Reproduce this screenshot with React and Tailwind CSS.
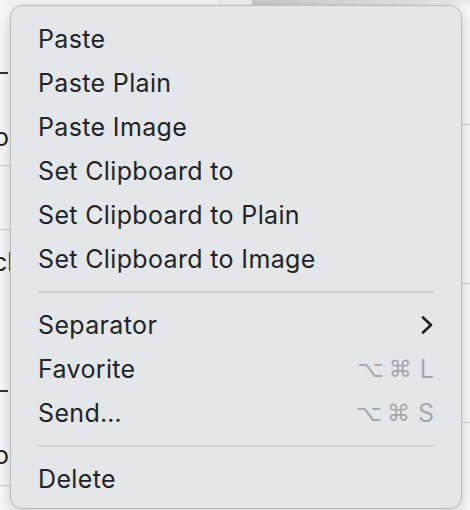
const items = [
  { label: "Paste" },
  { label: "Paste Plain" },
  { label: "Paste Image" },
  { label: "Set Clipboard to" },
  { label: "Set Clipboard to Plain" },
  { label: "Set Clipboard to Image" },
  { sep: true },
  { label: "Separator", submenu: true },
  { label: "Favorite", keys: "L" },
  { label: "Send…", keys: "S" },
  { sep: true },
  { label: "Delete" },
];

const Chevron = () => (
  <svg width="14" height="20" viewBox="0 0 14 20" fill="none">
    <path d="M3 2.5 L11 10 L3 17.5" stroke="#1f1f1f" strokeWidth="2.6" strokeLinecap="round" strokeLinejoin="round" />
  </svg>
);

const Shortcut = ({ k }) => (
  <div className="flex items-center gap-[5px] text-[#a6a8ab] leading-none">
    <span className="text-[23px] font-['DejaVu_Sans',sans-serif]">⌥</span>
    <span className="text-[23px] font-['DejaVu_Sans',sans-serif]">⌘</span>
    <span className="text-[25px] ml-[3px]">{k}</span>
  </div>
);

// bits of the window that peek out behind the menu
const LeftEdge = () => (
  <div className="w-[10px] flex flex-col overflow-hidden text-[25px] text-[#222]">
    <div className="h-[72px] shrink-0" />
    <div className="h-[2px] w-[8px] shrink-0 bg-[#333]" />
    <div className="h-[49px] shrink-0" />
    <div className="h-[28px] shrink-0 leading-[28px] -ml-[6px]">o</div>
    <div className="h-[14px] shrink-0" />
    <div className="h-px shrink-0 bg-[#cfcfcf]" />
    <div className="h-[63px] shrink-0" />
    <div className="h-px shrink-0 bg-[#cfcfcf]" />
    <div className="h-[18px] shrink-0" />
    <div className="h-[28px] shrink-0 leading-[28px] -ml-[7px] whitespace-nowrap">ch</div>
    <div className="h-[114px] shrink-0" />
    <div className="h-[2px] w-[8px] shrink-0 bg-[#333]" />
    <div className="h-[49px] shrink-0" />
    <div className="h-[28px] shrink-0 leading-[28px] -ml-[6px]">o</div>
    <div className="h-[16px] shrink-0" />
    <div className="h-px shrink-0 bg-[#cfcfcf]" />
  </div>
);

const RightEdge = () => (
  <div className="w-[10px] flex flex-col">
    <div className="h-[124px] shrink-0" />
    <div className="h-px shrink-0 bg-[#d2d2d2]" />
    <div className="h-[158px] shrink-0" />
    <div className="h-px shrink-0 bg-[#d2d2d2]" />
    <div className="h-[138px] shrink-0" />
    <div className="h-px shrink-0 bg-[#d2d2d2]" />
  </div>
);

const App = () => {
  return (
    <div className="relative w-[470px] h-[510px] overflow-hidden bg-[#f7f7f7] font-['Inter',sans-serif] flex flex-col">
      <div className="h-[5px] shrink-0 flex">
        <div className="w-[220px] bg-[#f3f3f3]" />
        <div className="w-[32px] bg-[#eeeeee] border-l border-[#d8d8d8]" />
        <div className="flex-1 bg-gradient-to-r from-[#c9c9c9] to-[#ececec]" />
      </div>
      <div className="flex-1 flex justify-between -mt-[5px]">
        <LeftEdge />
        <RightEdge />
      </div>

      {/* context menu */}
      <div className="absolute left-[10px] top-[5px] w-[452px] h-[504px] rounded-[12px] bg-[#e4e7ea] border border-[#bcbcbc] shadow-[0_4px_14px_rgba(0,0,0,0.18)] pt-[11px] pb-[8px]">
        {items.map((it, i) =>
          it.sep ? (
            <div key={i} className="my-[10px] mx-[27px] h-[2px] bg-[#cfd2d5]" />
          ) : (
            <div key={i} className="h-[44px] flex items-center justify-between pl-[27px] pr-[27px]">
              <span className="text-[25px] tracking-[0.35px] text-[#242424] leading-none">{it.label}</span>
              {it.submenu && <Chevron />}
              {it.keys && <Shortcut k={it.keys} />}
            </div>
          )
        )}
      </div>
    </div>
  );
};

export default App;
